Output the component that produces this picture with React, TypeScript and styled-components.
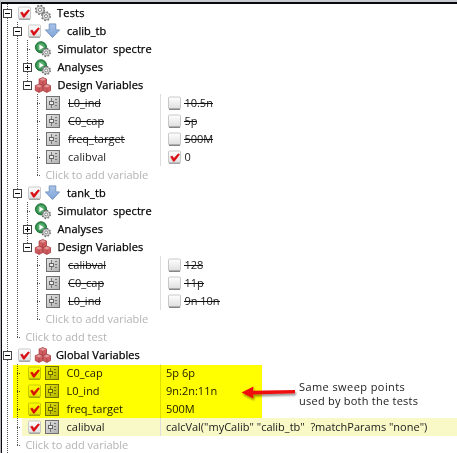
import React from 'react';
import styled, { createGlobalStyle, css } from 'styled-components';

const Global = createGlobalStyle`
  html, body { margin: 0; padding: 0; background: #fff; overflow: hidden; }
  *, *::before, *::after { box-sizing: border-box; }
`;

const Panel = styled.main`
  position: relative;
  width: 457px;
  height: 453px;
  overflow: hidden;
  background: #fff;
  border-top: 2px solid #c9ccd1;
  border-left: 1px solid #b4b4b8;
  font: 11px/18px 'Open Sans', 'Noto Sans', sans-serif;
  color: #1a1a1a;
`;

const Tree = styled.div`
  border-top: 2px solid #08080c;
  border-left: 1px solid #08080c;
  height: 460px;
`;

const TreeRow = styled.div<{ $tint?: boolean }>`
  display: flex;
  height: 18px;
  ${p => p.$tint && css`background: linear-gradient(90deg, transparent 20px, #f9f9c8 20px);`}
`;

const NameCell = styled.div`
  display: flex;
  align-items: center;
  width: 158px;
  flex: none;
  white-space: pre;
`;

const ValueCell = styled.div`
  display: flex;
  align-items: center;
  flex: 1;
  padding-left: 5px;
  border-left: 1px solid #dedee0;
  white-space: pre;
`;

const dotsV = css`repeating-linear-gradient(180deg, #555 0 1px, transparent 1px 2px)`;
const dotsH = css`repeating-linear-gradient(90deg, #555 0 1px, transparent 1px 2px)`;

const Guide = styled.span<{ $kind: string }>`
  display: flex;
  align-items: center;
  justify-content: center;
  width: 10px;
  height: 18px;
  flex: none;
  background-repeat: no-repeat;
  ${p => '|-+'.includes(p.$kind) && css`background-image: ${dotsV}; background-size: 1px 18px; background-position: 5px 0;`}
  ${p => p.$kind === 'T' && css`background-image: ${dotsV}, ${dotsH}; background-size: 1px 18px, 4px 1px; background-position: 5px 0, 5px 9px;`}
  ${p => p.$kind === 'L' && css`background-image: ${dotsV}, ${dotsH}; background-size: 1px 9px, 4px 1px; background-position: 5px 0, 5px 9px;`}
  ${p => p.$kind === 'e' && css`background-image: ${dotsV}; background-size: 1px 9px; background-position: 5px 0;`}
`;

const Expander = styled.svg`
  display: block;
  flex: none;
  width: 9px;
  height: 9px;
  margin: 1px 0 0 1px;
`;

const IconSlot = styled.span<{ $gap: number }>`
  display: flex;
  flex: none;
  margin-left: ${p => p.$gap}px;
  width: 16px;
  height: 18px;
  align-items: center;
  svg { display: block; overflow: visible; }
`;

const CheckSlot = styled.span<{ $gap: number }>`
  display: flex;
  flex: none;
  width: 13px;
  margin-left: ${p => p.$gap}px;
  svg { display: block; }
`;

type Tone = 'heading' | 'plain' | 'hint' | 'off';

const Label = styled.span<{ $tone?: Tone; $gap?: number; $track?: number }>`
  position: relative;
  height: 18px;
  margin-left: ${p => p.$gap ?? 0}px;
  letter-spacing: ${p => p.$track ?? 0}px;
  ${p => p.$tone === 'heading' && css`color: #000; -webkit-text-stroke: 0.25px #000;`}
  ${p => p.$tone === 'hint' && css`color: #b4b4b4;`}
  ${p => p.$tone === 'off' && css`
    &::after {
      content: '';
      position: absolute;
      left: 0;
      right: 0;
      top: 9px;
      height: 1px;
      background: #111;
    }
  `}
`;

const Highlight = styled.div`
  position: absolute;
  left: 12px;
  top: 363px;
  width: 249px;
  height: 53px;
  background: #ff0;
  mix-blend-mode: multiply;
`;

const Note = styled.p`
  position: absolute;
  left: 298px;
  top: 378px;
  margin: 0;
  font-size: 11px;
  line-height: 14px;
  white-space: pre;
`;

const NoteLine = styled.span<{ $track: number }>`
  display: block;
  letter-spacing: ${p => p.$track}px;
`;

const Arrow = styled.svg`
  position: absolute;
  left: 237px;
  top: 380px;
  overflow: visible;
`;

const Check = ({ on }: { on: boolean }) => (
  <svg width="13" height="14" viewBox="0 0 13 14">
    <rect x="0.5" y="1" width="12" height="12" rx="1" fill="url(#face)" stroke="#c8c8c8" />
    <path d="M1 13.2H12" stroke={on ? '#8a8a8a' : '#5d5d5d'} strokeWidth="1" />
    {on && <path d="M2.6 6.7L4.3 6.1 5.9 8.4 10.2 3.8 11.5 4.6 6.4 11.2 5.3 11.2Z" fill="#d90a10" stroke="#d90a10" strokeWidth="0.6" />}
  </svg>
);

const Gear = ({ x, y, r }: { x: number; y: number; r: number }) => (
  <g transform={`translate(${x} ${y})`}>
    <circle r={r} fill="none" stroke="#6a6a6a" strokeWidth="1.7" strokeDasharray={`${(r * Math.PI) / 8} ${(r * Math.PI) / 8}`} />
    <circle r={r - 0.5} fill="#e6e6e6" stroke="#808080" strokeWidth="0.8" />
    <circle r={r * 0.38} fill="#fff" stroke="#6a6a6a" strokeWidth="0.8" />
  </g>
);

const GearsIcon = () => (
  <svg width="16" height="16" viewBox="0 0 16 16">
    <Gear x={5} y={4.8} r={4.3} />
    <Gear x={11} y={11.2} r={4.1} />
  </svg>
);

const RunIcon = () => (
  <svg width="16" height="16" viewBox="0 0 16 16">
    <circle cx="6" cy="6.3" r="5.6" fill="#2f8f4c" stroke="#1d6b35" strokeWidth="0.9" />
    <circle cx="6" cy="6" r="3.8" fill="#55ab6c" />
    <path d="M4.4 3.4L8.8 6.2 4.4 9Z" fill="#fff" />
    <Gear x={11.2} y={11.4} r={3.9} />
  </svg>
);

const ArrowDownIcon = () => (
  <svg width="16" height="16" viewBox="0 0 16 16">
    <path d="M4.2 0.9H10.8V6.9H14.6L7.5 14.6 0.4 6.9H4.2Z" fill="url(#blue)" stroke="#7090bd" strokeWidth="0.9" strokeLinejoin="round" />
  </svg>
);

const Cube = ({ x, y }: { x: number; y: number }) => (
  <g transform={`translate(${x} ${y})`} strokeLinejoin="round">
    <path d="M0 -4L3.7 -2.6V2.4L0 4.2 -3.7 2.4V-2.6Z" fill="#cf5d60" stroke="#a5393e" strokeWidth="0.8" />
    <path d="M0 -3.6L3.2 -2.3 0 -0.8 -3.2 -2.3Z" fill="#e39a9a" />
    <path d="M0 -0.4V3.8" stroke="#a5393e" strokeWidth="0.6" />
  </g>
);

const CubesIcon = () => (
  <svg width="16" height="16" viewBox="0 0 16 16">
    <Cube x={7.8} y={4.6} />
    <Cube x={4} y={11.2} />
    <Cube x={11.8} y={11.2} />
  </svg>
);

const VariableIcon = () => (
  <svg width="14" height="14" viewBox="0 0 14 14">
    <rect x="0.5" y="0.5" width="13" height="13" fill="url(#steel)" stroke="#707070" />
    <path d="M5.5 2V12" stroke="#777" />
    <rect x="3.5" y="5.5" width="4" height="3" fill="#eee" stroke="#666" />
    <path d="M9 3.5H11M9 6.5H11M9 9.5H11" stroke="#777" />
  </svg>
);

const icons = { gears: GearsIcon, run: RunIcon, down: ArrowDownIcon, cubes: CubesIcon, variable: VariableIcon };

interface Item {
  guides: string;
  text: string;
  tone?: Tone;
  icon?: keyof typeof icons;
  check?: boolean;
  gap?: number;
  track?: number;
  value?: string;
  valueCheck?: boolean;
  tint?: boolean;
}

const test = (text: string, track: number): Item[] => [
  { guides: '|-', text, tone: 'heading', icon: 'down', check: true, gap: 6, track },
  { guides: '||T', text: 'Simulator  spectre', tone: 'heading', icon: 'run', gap: 6.5, track: 0.04 },
  { guides: '||+', text: 'Analyses', tone: 'heading', icon: 'run', gap: 6.5, track: 0.1 },
  { guides: '||e', text: 'Design Variables', tone: 'heading', icon: 'cubes', gap: 6.5, track: 0.06 },
];

const setting = (text: string, value: string, on = false): Item => ({
  guides: '|| T', text, value, icon: 'variable', gap: 6, valueCheck: on, tone: on ? 'plain' : 'off',
});

const shared = (text: string, value: string, tint = false): Item => ({
  guides: '|T', text, value, icon: 'variable', check: true, gap: 5.5, tint,
});

const items: Item[] = [
  { guides: '-', text: 'Tests', tone: 'heading', icon: 'gears', check: true, gap: 6, track: 0.2 },
  ...test('calib_tb', 0),
  setting('L0_ind', '10.5n'),
  setting('C0_cap', '5p'),
  setting('freq_target', '500M'),
  setting('calibval', '0', true),
  { guides: '|| L', text: 'Click to add variable', tone: 'hint' },
  ...test('tank_tb', 0.1),
  setting('calibval', '128'),
  setting('C0_cap', '11p'),
  setting('L0_ind', '9n 10n'),
  { guides: '|| L', text: 'Click to add variable', tone: 'hint' },
  { guides: '|L', text: 'Click to add test', tone: 'hint' },
  { guides: '-', text: 'Global Variables', tone: 'heading', icon: 'cubes', check: true, gap: 5, track: 0.06 },
  shared('C0_cap', '5p 6p'),
  shared('L0_ind', '9n:2n:11n'),
  shared('freq_target', '500M'),
  shared('calibval', 'calcVal("myCalib" "calib_tb"  ?matchParams "none")', true),
  { guides: '|L', text: 'Click to add variable', tone: 'hint' },
];

const Row = ({ item }: { item: Item }) => {
  const Icon = item.icon && icons[item.icon];
  const hasCheck = item.valueCheck !== undefined;
  return (
    <TreeRow $tint={item.tint}>
      <NameCell>
        {[...item.guides].map((kind, i) => (
          <Guide key={i} $kind={kind}>
            {'+-e'.includes(kind) && (
              <Expander viewBox="0 0 9 9">
                <rect x="0.5" y="0.5" width="8" height="8" fill="#fff" stroke="#444" />
                <path d={kind === '+' ? 'M2 4.5H7M4.5 2V7' : 'M2 4.5H7'} stroke="#000" />
              </Expander>
            )}
          </Guide>
        ))}
        {item.check && <CheckSlot $gap={6}><Check on /></CheckSlot>}
        {Icon && <IconSlot $gap={item.check || item.icon === 'variable' ? 4 : 3}><Icon /></IconSlot>}
        <Label $tone={item.tone} $gap={item.icon ? item.gap : 3.4} $track={item.track}>{item.text}</Label>
      </NameCell>
      {item.value !== undefined && (
        <ValueCell>
          {hasCheck && <CheckSlot $gap={2}><Check on={!!item.valueCheck} /></CheckSlot>}
          <Label $tone={item.tone} $gap={hasCheck ? 3.4 : 0}>{item.value}</Label>
        </ValueCell>
      )}
    </TreeRow>
  );
};

export default function App() {
  return (
    <>
      <Global />
      <Panel>
        <Tree>
          {items.map((item, i) => <Row key={i} item={item} />)}
        </Tree>
        <Highlight />
        <Arrow width="60" height="24" viewBox="0 0 60 24">
          <defs>
            <linearGradient id="face" x1="0" y1="0" x2="0" y2="1">
              <stop offset="0" stopColor="#fff" /><stop offset="1" stopColor="#dedede" />
            </linearGradient>
            <linearGradient id="blue" x1="0" y1="0" x2="0" y2="1">
              <stop offset="0" stopColor="#a9c3e8" /><stop offset="1" stopColor="#7fa5d8" />
            </linearGradient>
            <linearGradient id="steel" x1="0" y1="0" x2="1" y2="1">
              <stop offset="0" stopColor="#e4e4e4" /><stop offset="1" stopColor="#b0b0b0" />
            </linearGradient>
            <filter id="shade" x="-20%" y="-50%" width="140%" height="220%">
              <feDropShadow dx="1" dy="2" stdDeviation="1" floodColor="#000" floodOpacity="0.45" />
            </filter>
          </defs>
          <path d="M3.5 10.5L15.5 4.5 15 8.8 57 8V11.2L15 12.4 15.5 16.5Z" fill="#f00a0a" filter="url(#shade)" />
        </Arrow>
        <Note>
          <NoteLine $track={0.42}>Same sweep points</NoteLine>
          <NoteLine $track={0.24}>used by both the tests</NoteLine>
        </Note>
      </Panel>
    </>
  );
}
